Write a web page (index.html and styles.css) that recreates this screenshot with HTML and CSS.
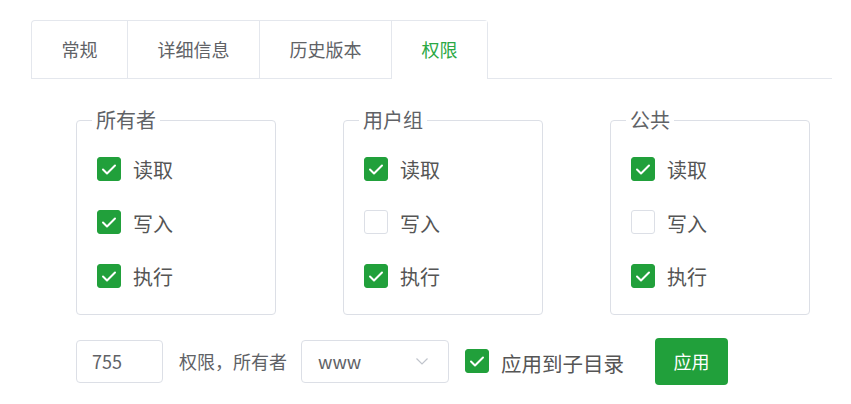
FILE: index.html
```html
<!DOCTYPE html>
<html lang="zh-CN">
<head>
<meta charset="utf-8">
<title>权限</title>
<link rel="stylesheet" href="styles.css">
</head>
<body>
<div class="page">
  <div class="tabs">
    <div class="tab-group">
      <div class="tab">常规</div>
      <div class="tab">详细信息</div>
      <div class="tab">历史版本</div>
      <div class="tab active">权限</div>
    </div>
  </div>

  <div class="groups">
    <fieldset class="group">
      <legend>所有者</legend>
      <div class="opts">
        <label class="opt"><span class="cb on"><svg viewBox="0 0 24 24"><polyline points="6,12.5 10,16.5 18,8.5"/></svg></span><span>读取</span></label>
        <label class="opt"><span class="cb on"><svg viewBox="0 0 24 24"><polyline points="6,12.5 10,16.5 18,8.5"/></svg></span><span>写入</span></label>
        <label class="opt"><span class="cb on"><svg viewBox="0 0 24 24"><polyline points="6,12.5 10,16.5 18,8.5"/></svg></span><span>执行</span></label>
      </div>
    </fieldset>
    <fieldset class="group">
      <legend>用户组</legend>
      <div class="opts">
        <label class="opt"><span class="cb on"><svg viewBox="0 0 24 24"><polyline points="6,12.5 10,16.5 18,8.5"/></svg></span><span>读取</span></label>
        <label class="opt"><span class="cb"></span><span>写入</span></label>
        <label class="opt"><span class="cb on"><svg viewBox="0 0 24 24"><polyline points="6,12.5 10,16.5 18,8.5"/></svg></span><span>执行</span></label>
      </div>
    </fieldset>
    <fieldset class="group">
      <legend>公共</legend>
      <div class="opts">
        <label class="opt"><span class="cb on"><svg viewBox="0 0 24 24"><polyline points="6,12.5 10,16.5 18,8.5"/></svg></span><span>读取</span></label>
        <label class="opt"><span class="cb"></span><span>写入</span></label>
        <label class="opt"><span class="cb on"><svg viewBox="0 0 24 24"><polyline points="6,12.5 10,16.5 18,8.5"/></svg></span><span>执行</span></label>
      </div>
    </fieldset>
  </div>

  <div class="bottom">
    <div class="input">755</div>
    <span class="text">权限，所有者</span>
    <div class="select"><span>www</span><svg class="chev" viewBox="0 0 12 7"><polyline points="0.5,0.5 6,6 11.5,0.5"/></svg></div>
    <label class="opt sub"><span class="cb on"><svg viewBox="0 0 24 24"><polyline points="6,12.5 10,16.5 18,8.5"/></svg></span><span>应用到子目录</span></label>
    <button class="btn">应用</button>
  </div>
</div>
</body>
</html>
```

FILE: styles.css
```css
* { box-sizing: border-box; }
html, body { margin: 0; padding: 0; background: #fff; }
body {
  font-family: "Noto Sans CJK SC", "Noto Sans", sans-serif;
  color: #606266;
}
.page { padding-top: 20px; }

.tabs {
  margin-left: 31px;
  width: 801px;
  display: flex;
  border-bottom: 1px solid #e4e7ed;
}
.tab-group {
  display: flex;
  border: 1px solid #e4e7ed;
  border-bottom: none;
  border-radius: 4px 4px 0 0;
}
.tab {
  height: 57px;
  line-height: 57px;
  padding: 0 29.5px;
  font-size: 18px;
  color: #606266;
}
.tab + .tab { border-left: 1px solid #e4e7ed; }
.tab.active {
  color: #2ba845;
  background: #fff;
  height: 58px;
  margin-bottom: -1px;
}

.groups {
  display: flex;
  gap: 67px;
  padding-left: 76px;
  margin-top: 29px;
}
.group {
  margin: 0;
  width: 200px;
  border: 1px solid #dcdfe6;
  border-radius: 4px;
  padding: 0 0 11px 15px;
  min-width: 0;
}
.group legend {
  font-size: 20px;
  line-height: 24px;
  padding: 0 4px;
  color: #606266;
}
.opts {
  display: flex;
  flex-direction: column;
  padding: 10px 0 0 5px;
}
.opt {
  display: flex;
  align-items: center;
  gap: 12px;
  height: 53.5px;
  font-size: 20px;
  color: #555;
}
.opt span:last-child { line-height: 24px; padding-top: 3px; }
.cb {
  width: 24px;
  height: 24px;
  border-radius: 3px;
  border: 1px solid #dcdfe6;
  background: #fff;
  flex: none;
  display: block;
}
.cb.on {
  background: #21a03b;
  border-color: #21a03b;
}
.cb svg {
  display: block;
  width: 24px;
  height: 24px;
  margin: -1px;
}
.cb svg polyline {
  fill: none;
  stroke: #fff;
  stroke-width: 2;
  stroke-linecap: round;
  stroke-linejoin: round;
}

.bottom {
  display: flex;
  align-items: center;
  padding-left: 76px;
  margin-top: 23px;
}
.input {
  width: 87px;
  height: 43px;
  border: 1px solid #dcdfe6;
  border-radius: 4px;
  padding-left: 15px;
  font-size: 18px;
  line-height: 41px;
  color: #606266;
}
.text {
  font-size: 18px;
  margin-left: 16px;
  color: #606266;
}
.select {
  margin-left: 14px;
  width: 148px;
  height: 43px;
  border: 1px solid #dcdfe6;
  border-radius: 4px;
  padding: 0 20px 0 16px;
  display: flex;
  align-items: center;
  justify-content: space-between;
  font-size: 18px;
  color: #606266;
}
.chev { width: 12px; height: 7px; }
.chev polyline { fill: none; stroke: #c0c4cc; stroke-width: 1.2; }
.opt.sub { margin-left: 16px; height: auto; font-size: 20.5px; }
.btn {
  margin-left: 31px;
  width: 73px;
  height: 47px;
  border: none;
  border-radius: 4px;
  background: #21a03b;
  color: #fff;
  font-family: inherit;
  font-size: 18px;
  padding: 0;
}
```
